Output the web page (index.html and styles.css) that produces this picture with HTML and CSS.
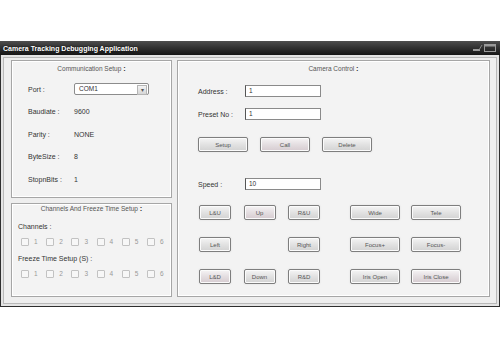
FILE: index.html
```html
<!DOCTYPE html>
<html lang="en">
<head>
    <meta charset="UTF-8">
    <meta name="viewport" content="width=device-width, initial-scale=1.0">
    <title>Camera Tracking Debugging Application</title>
    <link rel="stylesheet" href="styles.css">
</head>
<body>

<div class="window">
    <div class="titlebar">
        <span class="title">Camera Tracking Debugging Application</span>
        <svg class="winctl" width="26" height="10" viewBox="0 0 26 10">
            <rect x="1" y="6" width="7" height="2" fill="#9a9a9a"/>
            <path d="M7 7 L10 2" stroke="#8a8a8a" stroke-width="1"/>
            <rect x="12.5" y="1.5" width="11" height="7" fill="none" stroke="#9a9a9a"/>
            <rect x="12.5" y="1.5" width="11" height="2" fill="#9a9a9a"/>
        </svg>
    </div>

    <div class="frame">
        <div class="client">

            <div class="leftcol">
                <!-- Communication setup -->
                <div class="group comm">
                    <div class="group-title">Communication Setup <b>:</b></div>
                    <div class="fields">
                        <span class="lbl">Port :</span>
                        <div class="select">COM1<span class="arrow">&#9662;</span></div>
                        <span class="lbl">Baudiate :</span>
                        <span class="val">9600</span>
                        <span class="lbl">Parity :</span>
                        <span class="val">NONE</span>
                        <span class="lbl">ByteSize :</span>
                        <span class="val">8</span>
                        <span class="lbl">StopnBits :</span>
                        <span class="val">1</span>
                    </div>
                </div>

                <!-- Channels -->
                <div class="group chan">
                    <div class="group-title tight">Channels And Freeze Time Setup <b>:</b></div>
                    <div class="sub first">Channels :</div>
                    <div class="checks">
                        <label><span class="box"></span>1</label>
                        <label><span class="box"></span>2</label>
                        <label><span class="box"></span>3</label>
                        <label><span class="box"></span>4</label>
                        <label><span class="box"></span>5</label>
                        <label><span class="box"></span>6</label>
                    </div>
                    <div class="sub">Freeze Time Setup (S) :</div>
                    <div class="checks">
                        <label><span class="box"></span>1</label>
                        <label><span class="box"></span>2</label>
                        <label><span class="box"></span>3</label>
                        <label><span class="box"></span>4</label>
                        <label><span class="box"></span>5</label>
                        <label><span class="box"></span>6</label>
                    </div>
                </div>
            </div>

            <!-- Camera control -->
            <div class="group camera">
                <div class="group-title">Camera Control <b>:</b></div>

                <div class="form">
                    <span class="lbl">Address :</span>
                    <div class="input">1</div>
                    <span class="lbl">Preset No :</span>
                    <div class="input">1</div>
                </div>

                <div class="btn-row">
                    <button class="btn wide">Setup</button>
                    <button class="btn wide pink">Call</button>
                    <button class="btn wide">Delete</button>
                </div>

                <div class="form speed">
                    <span class="lbl">Speed :</span>
                    <div class="input">10</div>
                </div>

                <div class="controls">
                    <div class="pad">
                        <button class="btn">L&amp;U</button>
                        <button class="btn pink">Up</button>
                        <button class="btn">R&amp;U</button>
                        <button class="btn">Left</button>
                        <span></span>
                        <button class="btn">Right</button>
                        <button class="btn pink">L&amp;D</button>
                        <button class="btn">Down</button>
                        <button class="btn">R&amp;D</button>
                    </div>
                    <div class="zoom">
                        <button class="btn">Wide</button>
                        <button class="btn">Tele</button>
                        <button class="btn">Focus+</button>
                        <button class="btn">Focus-</button>
                        <button class="btn">Iris Open</button>
                        <button class="btn pink">Iris Close</button>
                    </div>
                </div>
            </div>

        </div>
    </div>
</div>

</body>
</html>
```

FILE: styles.css
```css
/* Page */
body {
    margin: 0;
    background: #fff;
    font-family: "Liberation Sans", Arial, sans-serif;
    font-size: 7px;
    color: #333;
}

/* Window frame */
.window {
    margin-top: 41px;
    width: 500px;
    box-sizing: border-box;
    border: 1px solid #2e2e2e;
    border-top: none;
    background: #e4e4e4;
}

.titlebar {
    height: 14px;
    margin: 0 -1px;
    padding: 0 2px 0 3px;
    display: flex;
    align-items: center;
    justify-content: space-between;
    background: linear-gradient(#4e4e4e 0%, #333 45%, #161616 100%);
    color: #fff;
    font-weight: bold;
    font-size: 7px;
    text-shadow: 0 0 2px #000;
}

.frame {
    padding: 2px;
}

.client {
    display: flex;
    gap: 5px;
    padding: 2px 6px 6px 7px;
    border: 1px solid #b9b9b9;
    background: #eeeeee;
}

/* Group boxes */
.leftcol {
    display: flex;
    flex-direction: column;
    gap: 5px;
    width: 161px;
}

.group {
    box-sizing: border-box;
    border: 1px solid #a6a6a6;
    box-shadow: inset 0 0 0 1px #fff;
    background: #f3f3f3;
}

.group-title {
    padding-top: 2px;
    line-height: 11px;
    text-align: center;
    font-size: 6.5px;
    color: #555;
}

.group-title.tight {
    padding-top: 0;
    line-height: 10px;
}

.group-title b {
    font-size: 7.5px;
    color: #333;
}

.comm {
    height: 138px;
}

.chan {
    height: 94px;
}

.camera {
    flex: 1;
    height: 237px;
}

/* Communication fields */
.fields {
    display: grid;
    grid-template-columns: 46px 75px;
    grid-auto-rows: 22.5px;
    align-items: center;
    margin-top: 4px;
    padding-left: 16px;
}

.lbl {
    color: #333;
}

.val {
    color: #333;
}

.select {
    position: relative;
    height: 12px;
    box-sizing: border-box;
    border: 1px solid #8c8c8c;
    border-radius: 2px;
    background: #fff;
    padding-left: 4px;
    line-height: 10px;
    font-size: 6.5px;
}

.select .arrow {
    position: absolute;
    right: 1px;
    top: 1px;
    width: 8px;
    height: 8px;
    border: 1px solid #b5b5b5;
    background: linear-gradient(#f4f4f4, #d6d6d6);
    font-size: 6px;
    line-height: 8px;
    text-align: center;
    color: #555;
}

/* Channels */
.sub {
    margin-top: 7px;
    padding-left: 6px;
    line-height: 10px;
}

.sub.first {
    margin-top: 8px;
}

.checks {
    display: grid;
    grid-template-columns: repeat(6, 25.2px);
    margin-top: 5px;
    padding-left: 9px;
    line-height: 10px;
    color: #999;
    font-size: 6.5px;
}

.checks + .sub {
    margin-top: 7px;
}

.checks label {
    display: flex;
    align-items: center;
    gap: 5px;
}

.box {
    width: 6px;
    height: 6px;
    border: 1px solid #c2c2c2;
    border-radius: 1px;
    background: #f7f7f7;
}

/* Camera control */
.form {
    display: grid;
    grid-template-columns: 47px 76px;
    grid-auto-rows: 12px;
    row-gap: 11px;
    align-items: center;
    margin-top: 11px;
    padding-left: 20px;
}

.form.speed {
    margin-top: 26px;
}

.input {
    height: 12px;
    box-sizing: border-box;
    border: 1px solid #8a8a8a;
    border-left-color: #555;
    background: #fff;
    padding-left: 3px;
    line-height: 10px;
    font-size: 6.5px;
}

.btn-row {
    display: flex;
    gap: 12px;
    margin-top: 17px;
    padding-left: 20px;
}

.btn {
    height: 15px;
    width: 32px;
    padding: 0;
    box-sizing: border-box;
    border: 1px solid #7e7e7e;
    border-radius: 2px;
    box-shadow: inset 0 0 0 1px #fbfbfb, 0 0 2px #dcdcdc;
    background: linear-gradient(#f5f5f5, #e2e2e2 50%, #d2d2d2);
    font-family: "Liberation Sans", Arial, sans-serif;
    font-size: 6px;
    color: #555;
}

.btn.wide {
    width: 50px;
}

.btn.pink {
    background: linear-gradient(#f6f4f5, #e4dee1 50%, #d6cbd0);
}

.controls {
    display: flex;
    gap: 30px;
    margin-top: 15px;
    padding-left: 21px;
}

.pad {
    display: grid;
    grid-template-columns: repeat(3, 32px);
    grid-auto-rows: 15px;
    column-gap: 12.5px;
    row-gap: 17px;
}

.zoom {
    display: grid;
    grid-template-columns: repeat(2, 50px);
    grid-auto-rows: 15px;
    column-gap: 11px;
    row-gap: 17px;
}

.zoom .btn {
    width: 50px;
}
```
